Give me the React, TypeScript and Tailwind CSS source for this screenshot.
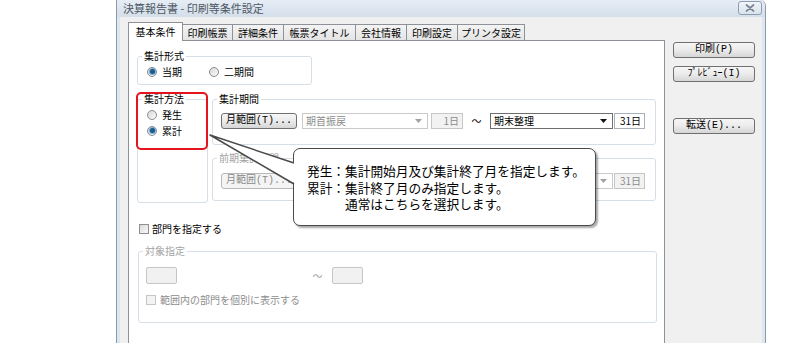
import clsx from 'clsx'
import type { ReactNode } from 'react'

const MONO = "font-['Liberation_Mono','Noto_Sans_CJK_JP',monospace]"

function Group({
  label,
  disabled,
  className,
  children,
}: {
  label: string
  disabled?: boolean
  className?: string
  children?: ReactNode
}) {
  return (
    <div className={clsx('relative rounded-[3px] border border-[#d5dfe5]', className)}>
      <span
        className={clsx(
          'absolute -top-[8px] left-[4px] bg-white px-[2px] leading-[14px]',
          disabled ? 'text-[#a3a3a3]' : 'text-black'
        )}
      >
        {label}
      </span>
      {children}
    </div>
  )
}

function Radio({ checked, label }: { checked?: boolean; label: string }) {
  return (
    <div className="flex h-[14px] items-center gap-[5px]">
      <span className="flex h-[10px] w-[10px] items-center justify-center rounded-full border border-[#8a8c8e] bg-gradient-to-br from-[#d8d8d8] to-[#fbfbfb]">
        {checked && (
          <span className="h-[5px] w-[5px] rounded-full bg-[#1d5a8a] shadow-[0_0_1px_1px_#6fa6d4]" />
        )}
      </span>
      <span>{label}</span>
    </div>
  )
}

function Check({ label, disabled }: { label: string; disabled?: boolean }) {
  return (
    <div className="flex h-[12px] items-center gap-[3px]">
      <span
        className={clsx(
          'h-[10px] w-[10px] border',
          disabled
            ? 'border-[#c5c5c5] bg-[#f3f3f3]'
            : 'border-[#8e8f8f] bg-gradient-to-br from-[#dcdcdc] to-[#f8f8f8]'
        )}
      />
      <span className={clsx(disabled ? 'ml-[1px] text-[#8d8d8d]' : 'text-black')}>{label}</span>
    </div>
  )
}

function Btn({
  children,
  disabled,
  className,
}: {
  children: ReactNode
  disabled?: boolean
  className?: string
}) {
  return (
    <div
      className={clsx(
        'flex h-[16px] items-center justify-center rounded-[3px] border leading-none',
        MONO,
        disabled
          ? 'border-[#b8b8b8] bg-[#f4f4f4] text-[#8a8a8a]'
          : 'border-[#707070] bg-gradient-to-b from-[#f6f6f6] via-[#ebebeb] to-[#d6d6d6] text-black',
        className
      )}
    >
      {children}
    </div>
  )
}

function Arrow({ disabled }: { disabled?: boolean }) {
  return (
    <svg width="7" height="4" viewBox="0 0 7 4">
      <polygon points="0,0 7,0 3.5,4" fill={disabled ? '#a2a2a2' : '#111'} />
    </svg>
  )
}

function Combo({
  value,
  disabled,
  className,
}: {
  value?: string
  disabled?: boolean
  className?: string
}) {
  return (
    <div
      className={clsx(
        'flex h-[16px] items-center justify-between border pl-[3px] pr-[5px]',
        disabled ? 'border-[#cacaca] bg-white text-[#8c8c8c]' : 'border-[#6e6e6e] bg-white text-black',
        className
      )}
    >
      <span>{value}</span>
      <Arrow disabled={disabled} />
    </div>
  )
}

function Field({
  value,
  disabled,
  className,
}: {
  value?: string
  disabled?: boolean
  className?: string
}) {
  return (
    <div
      className={clsx(
        'flex h-[16px] items-center justify-end border pr-[3px]',
        disabled ? 'border-[#c6c6c6] bg-[#f2f2f2] text-[#8c8c8c]' : 'border-[#a9afb7] bg-white text-black',
        className
      )}
    >
      {value}
    </div>
  )
}

// the previous-period row is mostly hidden under the callout, so its hidden texts are left out
function PeriodRow({ disabled }: { disabled?: boolean }) {
  return (
    <div className="flex items-center pl-[8px]">
      <Btn disabled={disabled} className="w-[76px]">
        月範囲(T)...
      </Btn>
      <Combo value={disabled ? undefined : '期首振戻'} disabled className="ml-[5px] w-[126px]" />
      <Field value={disabled ? undefined : '1日'} disabled className="ml-[3px] w-[32px]" />
      <span className="w-[27px] text-center">{disabled ? '' : '～'}</span>
      <Combo value={disabled ? undefined : '期末整理'} disabled={disabled} className="w-[123px]" />
      <Field value="31日" disabled={disabled} className="ml-[1px] w-[31px]" />
    </div>
  )
}

const tabs = [
  { label: '基本条件', w: 'w-[55px]' },
  { label: '印刷帳票', w: 'w-[51px]' },
  { label: '詳細条件', w: 'w-[52px]' },
  { label: '帳票タイトル', w: 'w-[73px]' },
  { label: '会社情報', w: 'w-[52px]' },
  { label: '印刷設定', w: 'w-[52px]' },
  { label: 'プリンタ設定', w: 'w-[68px]' },
]

export default function App() {
  return (
    <div className="relative h-[343px] w-[800px] overflow-hidden bg-white font-['Noto_Sans_CJK_JP',sans-serif] text-[10px] text-black">
      {/* window */}
      <div className="ml-[116px] flex h-[420px] w-[650px] flex-col rounded-tr-[6px] border-x border-[#8d9aaa] bg-[#dde6ef]">
        <div className="flex h-[22px] items-center justify-between rounded-tr-[6px] bg-gradient-to-b from-[#e6edf5] to-[#d4dfea] pl-[6px] pr-[3px]">
          <span className="text-[11px] text-[#4e5864]">決算報告書 - 印刷等条件設定</span>
          <div className="mt-[-1px] flex h-[14px] w-[24px] items-center justify-center rounded-[3px] border border-[#8e9eb2] bg-gradient-to-b from-[#f2f5f9] to-[#d9e2eb]">
            <svg width="10" height="8" viewBox="0 0 10 8">
              <path d="M1.5 1 L8.5 7 M8.5 1 L1.5 7" stroke="#7a8595" strokeWidth="1.7" strokeLinecap="round" />
            </svg>
          </div>
        </div>

        <div className="mx-[3px] flex flex-1 bg-[#f0f0f0] pl-[8px] pt-[5px]">
          {/* tab control */}
          <div className="flex w-[537px] flex-col">
            <div className="relative z-10 -mb-[1px] flex h-[19px] items-end">
              {tabs.map((t, i) => (
                <div
                  key={t.label}
                  className={clsx(
                    'flex items-center justify-center border border-[#8e9197] border-b-0',
                    t.w,
                    i > 0 && '-ml-[1px]',
                    i === 0
                      ? 'h-[19px] bg-white'
                      : 'mb-[1px] h-[16px] bg-gradient-to-b from-[#f4f4f4] to-[#e4e4e4]'
                  )}
                >
                  {t.label}
                </div>
              ))}
            </div>
            <div className="h-[400px] border border-[#8e9197] bg-white pl-[8px] pt-[15px]">
              <Group label="集計形式" className="flex h-[29px] w-[175px] items-center gap-[27px] pl-[9px] pt-[3px]">
                <Radio checked label="当期" />
                <Radio label="二期間" />
              </Group>

              <div className="mt-[14px] flex">
                <Group label="集計方法" className="flex h-[104px] w-[71px] flex-col gap-[2px] pl-[9px] pt-[8px]">
                  <Radio label="発生" />
                  <Radio checked label="累計" />
                </Group>
                <div className="ml-[4px] flex w-[444px] flex-col">
                  <Group label="集計期間" className="h-[46px] pt-[13px]">
                    <PeriodRow />
                  </Group>
                  <Group label="前期集計期間" disabled className="mt-[13px] h-[43px] pt-[14px]">
                    <PeriodRow disabled />
                  </Group>
                </div>
              </div>

              <div className="mt-[20px] pl-[2px]">
                <Check label="部門を指定する" />
              </div>

              <Group label="対象指定" disabled className="ml-[1px] mt-[16px] h-[72px] w-[519px] pl-[7px] pt-[15px]">
                <div className="flex items-center">
                  <div className="h-[17px] w-[31px] rounded-[2px] border border-[#c6c6c6] bg-[#f1f1f1]" />
                  <span className="ml-[133px] w-[15px] text-center text-[#a0a0a0]">～</span>
                  <div className="ml-[7px] h-[17px] w-[31px] rounded-[2px] border border-[#c6c6c6] bg-[#f1f1f1]" />
                </div>
                <div className="mt-[10px]">
                  <Check label="範囲内の部門を個別に表示する" disabled />
                </div>
              </Group>
            </div>
          </div>

          {/* command buttons */}
          <div className="ml-[8px] flex w-[82px] flex-col pt-[20px]">
            <Btn>印刷(P)</Btn>
            <Btn className="mt-[8px]">ﾌﾟﾚﾋﾞｭｰ(I)</Btn>
            <Btn className="mt-[36px]">転送(E)...</Btn>
          </div>
        </div>
      </div>

      {/* annotation: red frame */}
      <div className="absolute left-[136px] top-[92px] h-[58px] w-[72px] rounded-[5px] border-2 border-[#e5141c]" />

      {/* annotation: callout */}
      <div className="absolute left-[293px] top-[148px] h-[78px] w-[303px] rounded-[7px] border-[1.5px] border-[#4a4a4a] bg-white pl-[13px] pt-[14px] text-[12.7px] leading-[16.5px] shadow-[2px_2px_2px_rgba(0,0,0,0.35)]">
        <div>発生：集計開始月及び集計終了月を指定します。</div>
        <div>累計：集計終了月のみ指定します。</div>
        <div className="pl-[38px]">通常はこちらを選択します。</div>
      </div>
      <svg className="pointer-events-none absolute left-0 top-0" width="800" height="343">
        <polygon points="210,135 296,163 296,184" fill="white" />
        <path d="M294 163 L210 135 L294 184" fill="none" stroke="#4a4a4a" strokeWidth="1.5" strokeLinejoin="round" />
      </svg>
    </div>
  )
}
